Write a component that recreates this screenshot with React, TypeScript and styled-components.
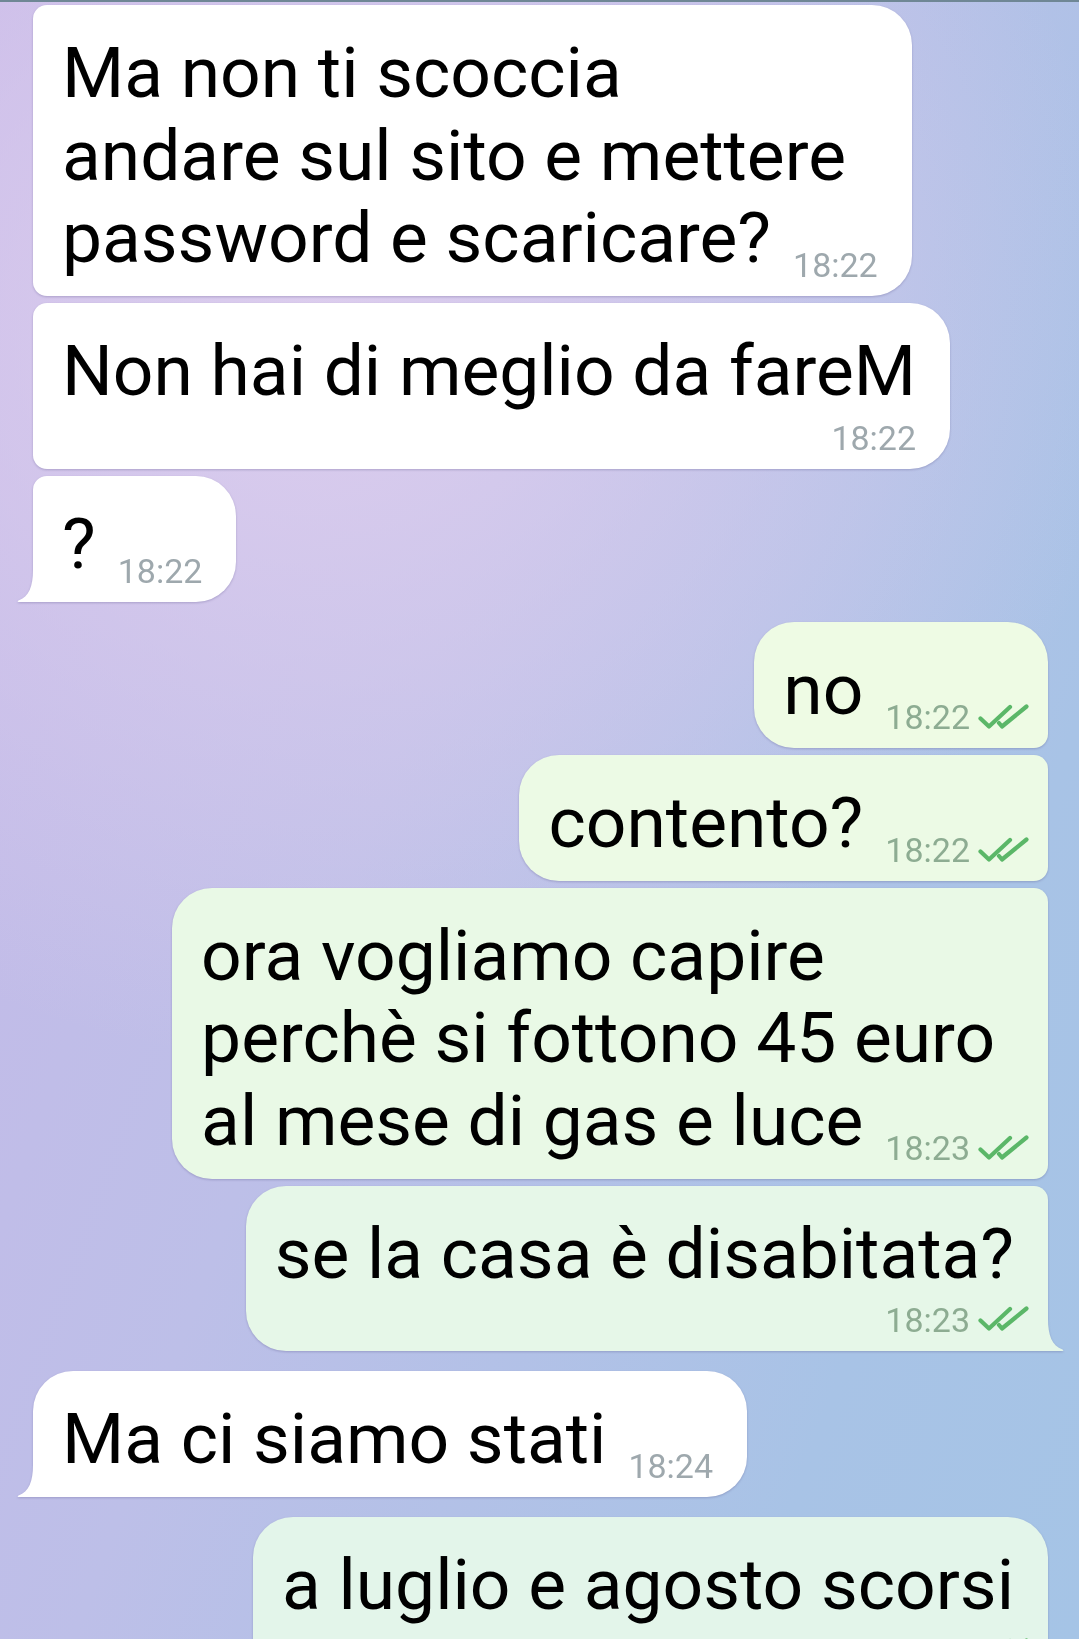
import styled, { createGlobalStyle } from "styled-components";

const GlobalStyle = createGlobalStyle`
  html, body {
    margin: 0;
    padding: 0;
  }
  body {
    font-family: Roboto, "Noto Sans", "Liberation Sans", sans-serif;
  }
`;

const Screen = styled.div`
  width: 1079px;
  height: 1639px;
  overflow: hidden;
  display: flex;
  flex-direction: column;
  background:
    radial-gradient(ellipse 75% 45% at 30% 20%, rgba(222, 206, 238, 0.95) 0%, rgba(222, 206, 238, 0) 100%),
    linear-gradient(110deg, #c6b9e8 0%, #bdbfe8 40%, #a8c3e6 80%, #a5c4e6 100%);
`;

const TopEdge = styled.div`
  height: 2px;
  flex-shrink: 0;
  background: #6f8795;
`;

const Feed = styled.div`
  display: flex;
  flex-direction: column;
  padding: 3px 31px 0 33px;
`;

const Row = styled.div<{ $out?: boolean; $spaced?: boolean }>`
  display: flex;
  justify-content: ${(p) => (p.$out ? "flex-end" : "flex-start")};
  margin-top: ${(p) => (p.$spaced ? "20px" : "7px")};

  &:first-child {
    margin-top: 0;
  }
`;

const Bubble = styled.div<{ $bg: string; $r: string }>`
  position: relative;
  background: ${(p) => p.$bg};
  border-radius: ${(p) => p.$r};
  padding: 27px 34px 16px 29px;
  color: #000;
  font-size: 71.3px;
  line-height: 82.5px;
  white-space: nowrap;
  filter: drop-shadow(0 1px 1px rgba(70, 60, 120, 0.28));
`;

const Tail = styled.svg<{ $out?: boolean }>`
  position: absolute;
  bottom: 0;
  width: 18px;
  height: 32px;
  ${(p) => (p.$out ? "right: -16px; transform: scaleX(-1);" : "left: -16px;")}
`;

const Time = styled.span<{ $out?: boolean; $gap: number }>`
  display: inline-block;
  margin-left: ${(p) => p.$gap}px;
  margin-right: ${(p) => (p.$out ? "-16px" : "0")};
  vertical-align: -15px;
  font-size: 34px;
  line-height: 30px;
  color: ${(p) => (p.$out ? "#8dac92" : "#9ea8ad")};
`;

const TimeLine = styled.div<{ $out?: boolean }>`
  display: flex;
  justify-content: flex-end;
  align-items: baseline;
  margin-top: 10px;
  margin-right: ${(p) => (p.$out ? "-16px" : "0")};
  font-size: 34px;
  line-height: 30px;
  color: ${(p) => (p.$out ? "#8dac92" : "#9ea8ad")};
`;

const Checks = styled.svg`
  display: inline-block;
  width: 52px;
  height: 26px;
  margin-left: 8px;
  vertical-align: -1px;
`;

const DoubleCheck = () => (
  <Checks viewBox="0 0 52 26" fill="none">
    <path
      d="M2.5 14.5 L11 22.5 L32 3"
      stroke="#5bb768"
      strokeWidth="4.2"
      strokeLinecap="round"
      strokeLinejoin="round"
    />
    <path
      d="M21 19 L24 22.5 L48.5 2.5"
      stroke="#5bb768"
      strokeWidth="4.2"
      strokeLinecap="round"
      strokeLinejoin="round"
    />
  </Checks>
);

interface IMsg {
  out?: boolean;
  lines: string[];
  time: string;
  r: string;
  tail?: boolean;
  below?: boolean;
  gap?: number;
  spaced?: boolean;
  bg?: string;
}

const L = 40;
const S = 14;

const messages: IMsg[] = [
  {
    lines: ["Ma non ti scoccia", "andare sul sito e mettere", "password e scaricare?"],
    time: "18:22",
    r: `${S}px ${L}px ${L}px ${S}px`,
  },
  {
    lines: ["Non hai di meglio da fareM"],
    time: "18:22",
    r: `${S}px ${L}px ${L}px ${S}px`,
    below: true,
  },
  {
    lines: ["?"],
    time: "18:22",
    r: `${S}px ${L}px ${L}px 0`,
    tail: true,
  },
  {
    out: true,
    spaced: true,
    lines: ["no"],
    time: "18:22",
    r: `${L}px ${L}px ${S}px ${L}px`,
    bg: "#eefbe4",
  },
  {
    out: true,
    lines: ["contento?"],
    time: "18:22",
    r: `${L}px ${S}px ${S}px ${L}px`,
    bg: "#ecfae5",
  },
  {
    out: true,
    lines: ["ora vogliamo capire", "perchè si fottono 45 euro", "al mese di gas e luce"],
    time: "18:23",
    r: `${L}px ${S}px ${S}px ${L}px`,
    bg: "#e9f9e6",
  },
  {
    out: true,
    lines: ["se la casa è disabitata?"],
    time: "18:23",
    r: `${L}px ${S}px 0 ${L}px`,
    tail: true,
    below: true,
    bg: "#e6f7e8",
  },
  {
    spaced: true,
    lines: ["Ma ci siamo stati"],
    time: "18:24",
    r: `${L}px ${L}px ${L}px 0`,
    tail: true,
  },
  {
    out: true,
    spaced: true,
    lines: ["a luglio e agosto scorsi"],
    time: "18:24",
    r: `${L}px ${L}px ${S}px ${L}px`,
    below: true,
    bg: "#e3f5ea",
  },
];

function Message({ msg }: { msg: IMsg }) {
  const bg = msg.bg ?? "#ffffff";
  const stamp = (
    <>
      {msg.time}
      {msg.out && <DoubleCheck />}
    </>
  );
  return (
    <Row $out={msg.out} $spaced={msg.spaced}>
      <Bubble $bg={bg} $r={msg.r}>
        {msg.lines.map((line, i) => (
          <span key={i}>
            {line}
            {i < msg.lines.length - 1 && <br />}
          </span>
        ))}
        {!msg.below && (
          <Time $out={msg.out} $gap={msg.gap ?? 22}>
            {stamp}
          </Time>
        )}
        {msg.below && <TimeLine $out={msg.out}>{stamp}</TimeLine>}
        {msg.tail && (
          <Tail $out={msg.out} viewBox="0 0 18 32">
            <path
              d="M16 0 C16 16 12 27 1.5 30.5 C0.3 30.9 0.4 32 1.6 32 L18 32 L18 0 Z"
              fill={bg}
            />
          </Tail>
        )}
      </Bubble>
    </Row>
  );
}

export default function App() {
  return (
    <>
      <GlobalStyle />
      <Screen>
        <TopEdge />
        <Feed>
          {messages.map((m, i) => (
            <Message key={i} msg={m} />
          ))}
        </Feed>
      </Screen>
    </>
  );
}
